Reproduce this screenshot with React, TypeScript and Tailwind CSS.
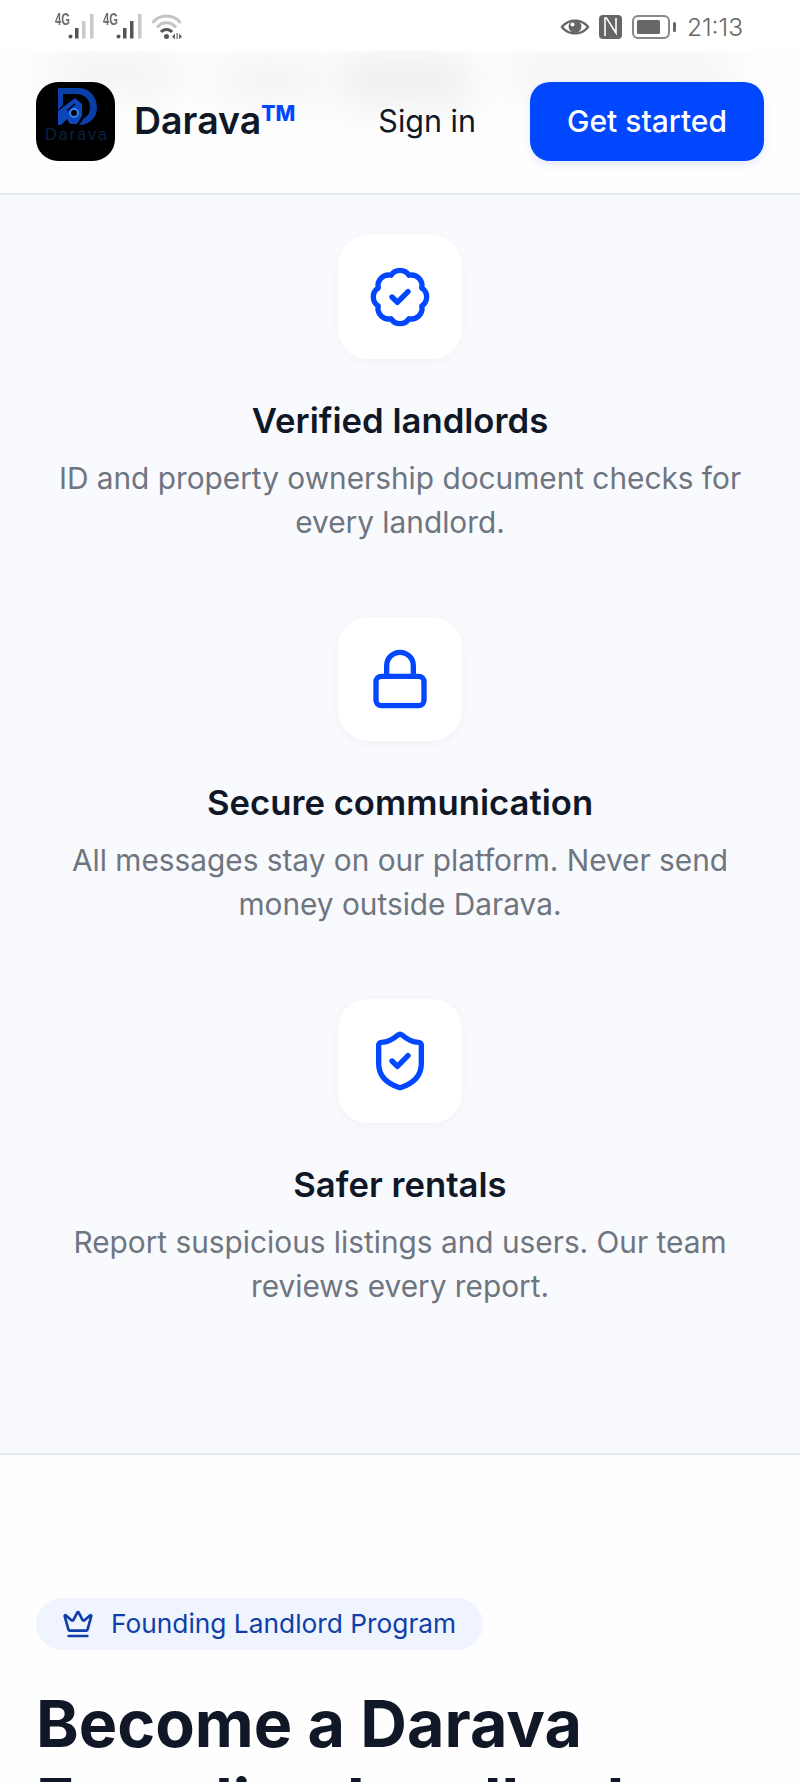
import { BadgeCheck, Crown, Lock, ShieldCheck } from "lucide-react";
import type { ReactNode } from "react";

const features = [
  {
    title: "Verified landlords",
    text: ["ID and property ownership document checks for", "every landlord."],
    icon: <BadgeCheck size={64} strokeWidth={2} />,
  },
  {
    title: "Secure communication",
    text: ["All messages stay on our platform. Never send", "money outside Darava."],
    icon: <Lock size={64} strokeWidth={2} />,
  },
  {
    title: "Safer rentals",
    text: ["Report suspicious listings and users. Our team", "reviews every report."],
    icon: <ShieldCheck size={64} strokeWidth={2} />,
  },
];

function SignalIcon({ strong }: { strong?: boolean }) {
  return (
    <span className="relative flex h-[26px] w-[42px]">
      <span className="absolute left-0 top-[-1px] origin-left scale-x-[0.7] text-[16px] font-bold leading-[16px] text-[#6b6b6b] [font-family:'Liberation_Sans',sans-serif]">4G</span>
      <svg width="42" height="26" viewBox="0 0 42 26" className="absolute left-0 top-0">
        <circle cx="15.500" cy="23.500" r="2" fill="#555" />
        <rect x="20" y="15" width="3.500" height="10.500" fill="#555" />
        <rect x="27" y="8" width="3.500" height="17.500" fill={strong ? "#555" : "#c9c9c9"} />
        <rect x="35" y="1" width="3.500" height="24.500" fill="#c9c9c9" />
      </svg>
    </span>
  );
}

function WifiIcon() {
  return (
    <svg width="32" height="26" viewBox="0 0 32 26" fill="none">
      <path d="M1.500 10C8 0.500 23 0.500 29.500 10" stroke="#c4c4c4" strokeWidth="3" />
      <path d="M6 14.500C11 8 20 8 25 14.500" stroke="#c4c4c4" strokeWidth="3" />
      <path d="M10 19C13 15.500 18 15.500 21 19" stroke="#555" strokeWidth="3" />
      <circle cx="15.500" cy="23.500" r="2.500" fill="#555" />
      <path d="M21 23.500l3-3v6zM28 20.500l3 3-3 3zM25.500 20h1.200v6.500h-1.200z" fill="#666" />
    </svg>
  );
}

function StatusBar() {
  return (
    <div className="flex h-[51px] items-center justify-between bg-white pl-[55px] pr-[57px]">
      <div className="flex items-center gap-[6px]">
        <SignalIcon />
        <SignalIcon strong />
        <WifiIcon />
      </div>
      <div className="flex items-center pt-[2px] text-[#666]">
        <svg width="30" height="22" viewBox="0 0 30 22" className="mr-[9px]">
          <path d="M0.500 11C7 1 23 1 29.500 11C23 21 7 21 0.500 11Z" fill="#666" />
          <path d="M3.500 11C9 4 21 4 26.500 11C21 18 9 18 3.500 11Z" fill="#fff" />
          <circle cx="15" cy="10.500" r="6.500" fill="#666" />
          <circle cx="12.500" cy="8.500" r="2" fill="#fff" />
        </svg>
        <svg width="23" height="24" viewBox="0 0 23 24" className="mr-[10px]">
          <rect width="23" height="24" rx="4" fill="#666" />
          <path d="M6 21V3h1.500L17 18V3" fill="none" stroke="#fff" strokeWidth="1.600" />
        </svg>
        <svg width="45" height="24" viewBox="0 0 45 24" className="mr-[10px]" fill="none">
          <rect x="1" y="1" width="36" height="22" rx="5" stroke="#888" strokeWidth="2" />
          <rect x="5" y="5" width="23" height="14" rx="1.500" fill="#666" />
          <rect x="41" y="7" width="3" height="10" rx="1.500" fill="#666" />
        </svg>
        <span className="mt-[1px] text-[24.500px] font-light leading-none">21:13</span>
      </div>
    </div>
  );
}

function Logo() {
  return (
    <div className="flex size-[79px] items-center justify-center overflow-hidden rounded-[22px] bg-black">
      <svg width="79" height="79" viewBox="0 0 79 79" fill="none">
        <defs>
          <linearGradient id="logoFill" x1="20" y1="10" x2="60" y2="50">
            <stop offset="0" stopColor="#0a3fa8" />
            <stop offset="1" stopColor="#1c66e0" />
          </linearGradient>
        </defs>
        <path d="M22 6H42C55 6 61 16 61 26C61 36 53 43 43 43L48 36C52 34 54 30 54 25C54 17 48 12 40 12H27V23L22 28Z" fill="url(#logoFill)" />
        <path d="M22 43V29L39 16L46 22V34L41 42H34L31 37L25 43Z" fill="#0d46b8" />
        <path d="M39 22L31 29" stroke="#000" strokeWidth="1.500" />
        <circle cx="38" cy="31" r="4" fill="#000" stroke="#3b82f6" strokeWidth="2" />
        <text x="9" y="58" textLength={62} fontSize="16" fontWeight="500" fill="#0a2044" fontFamily="'Liberation Sans', sans-serif">Darava</text>
      </svg>
    </div>
  );
}

function Header() {
  return (
    <header className="relative h-[144px] overflow-hidden border-b-2 border-[#e4e7ec] bg-[#fefefe]">
      <div aria-hidden="true" className="absolute left-[50px] top-[6px] h-[34px] w-[130px] bg-[#e9eaec] opacity-70 blur-[20px]" />
      <div aria-hidden="true" className="absolute left-[220px] top-[12px] h-[34px] w-[100px] bg-[#e9eaec] opacity-70 blur-[20px]" />
      <div aria-hidden="true" className="absolute left-[340px] top-[8px] h-[44px] w-[130px] bg-[#e6e7e9] opacity-80 blur-[20px]" />
      <div aria-hidden="true" className="absolute left-[510px] top-[6px] h-[30px] w-[220px] bg-[#eaebed] opacity-70 blur-[20px]" />
      <div className="relative flex h-full items-center justify-between px-[36px] pb-[2px]">
        <div className="flex items-center gap-[19px]">
          <Logo />
          <span className="flex items-start text-[37.500px] font-semibold leading-none text-[#101828]">
            Darava
            <span className="mt-[1px] text-[21px] font-extrabold leading-none text-[#0047ff]">TM</span>
          </span>
        </div>
        <div className="flex items-center gap-[54px]">
          <span className="text-[30.500px] font-normal text-[#101828]">Sign in</span>
          <button className="flex h-[79px] w-[234px] items-center justify-center rounded-[20px] bg-[#0047ff] text-[30px] font-medium text-white shadow-[0_3px_8px_rgba(0,71,255,0.12)]">
            Get started
          </button>
        </div>
      </div>
    </header>
  );
}

function Feature({ title, text, icon }: { title: string; text: string[]; icon: ReactNode }) {
  return (
    <div className="flex flex-col items-center text-center">
      <div className="flex size-[124px] items-center justify-center rounded-[30px] bg-white text-[#0047ff] shadow-[0_2px_8px_rgba(16,24,40,0.04)]">
        {icon}
      </div>
      <h3 className="mt-[36px] text-[34.700px] font-semibold leading-[50px] text-[#101828]">{title}</h3>
      <p className="mt-[11px] text-[29.800px] leading-[44px] text-[#6f7580]">
        {text[0]}
        <br />
        {text[1]}
      </p>
    </div>
  );
}

export default function App() {
  return (
    <div className="h-[1782px] overflow-hidden bg-[#fefefe] font-['Inter',sans-serif]">
      <StatusBar />
      <Header />
      <section className="flex h-[1260px] flex-col gap-[73px] border-b-2 border-[#e4e7ec] bg-[#f8fafd] pt-[40px]">
        {features.map((feature) => (
          <Feature key={feature.title} {...feature} />
        ))}
      </section>
      <section className="px-[36px] pt-[143px]">
        <div className="inline-flex h-[52px] items-center gap-[17px] rounded-full bg-[#eff4fe] pl-[26px] pr-[27px] text-[#0f3ea8]">
          <Crown size={32} strokeWidth={2} />
          <span className="text-[26.300px] leading-none">Founding Landlord Program</span>
        </div>
        <h2 className="mt-[35px] text-[64.600px] font-bold leading-[78px] text-[#101828]">
          Become a Darava
          <br />
          Founding Landlord
        </h2>
      </section>
    </div>
  );
}
